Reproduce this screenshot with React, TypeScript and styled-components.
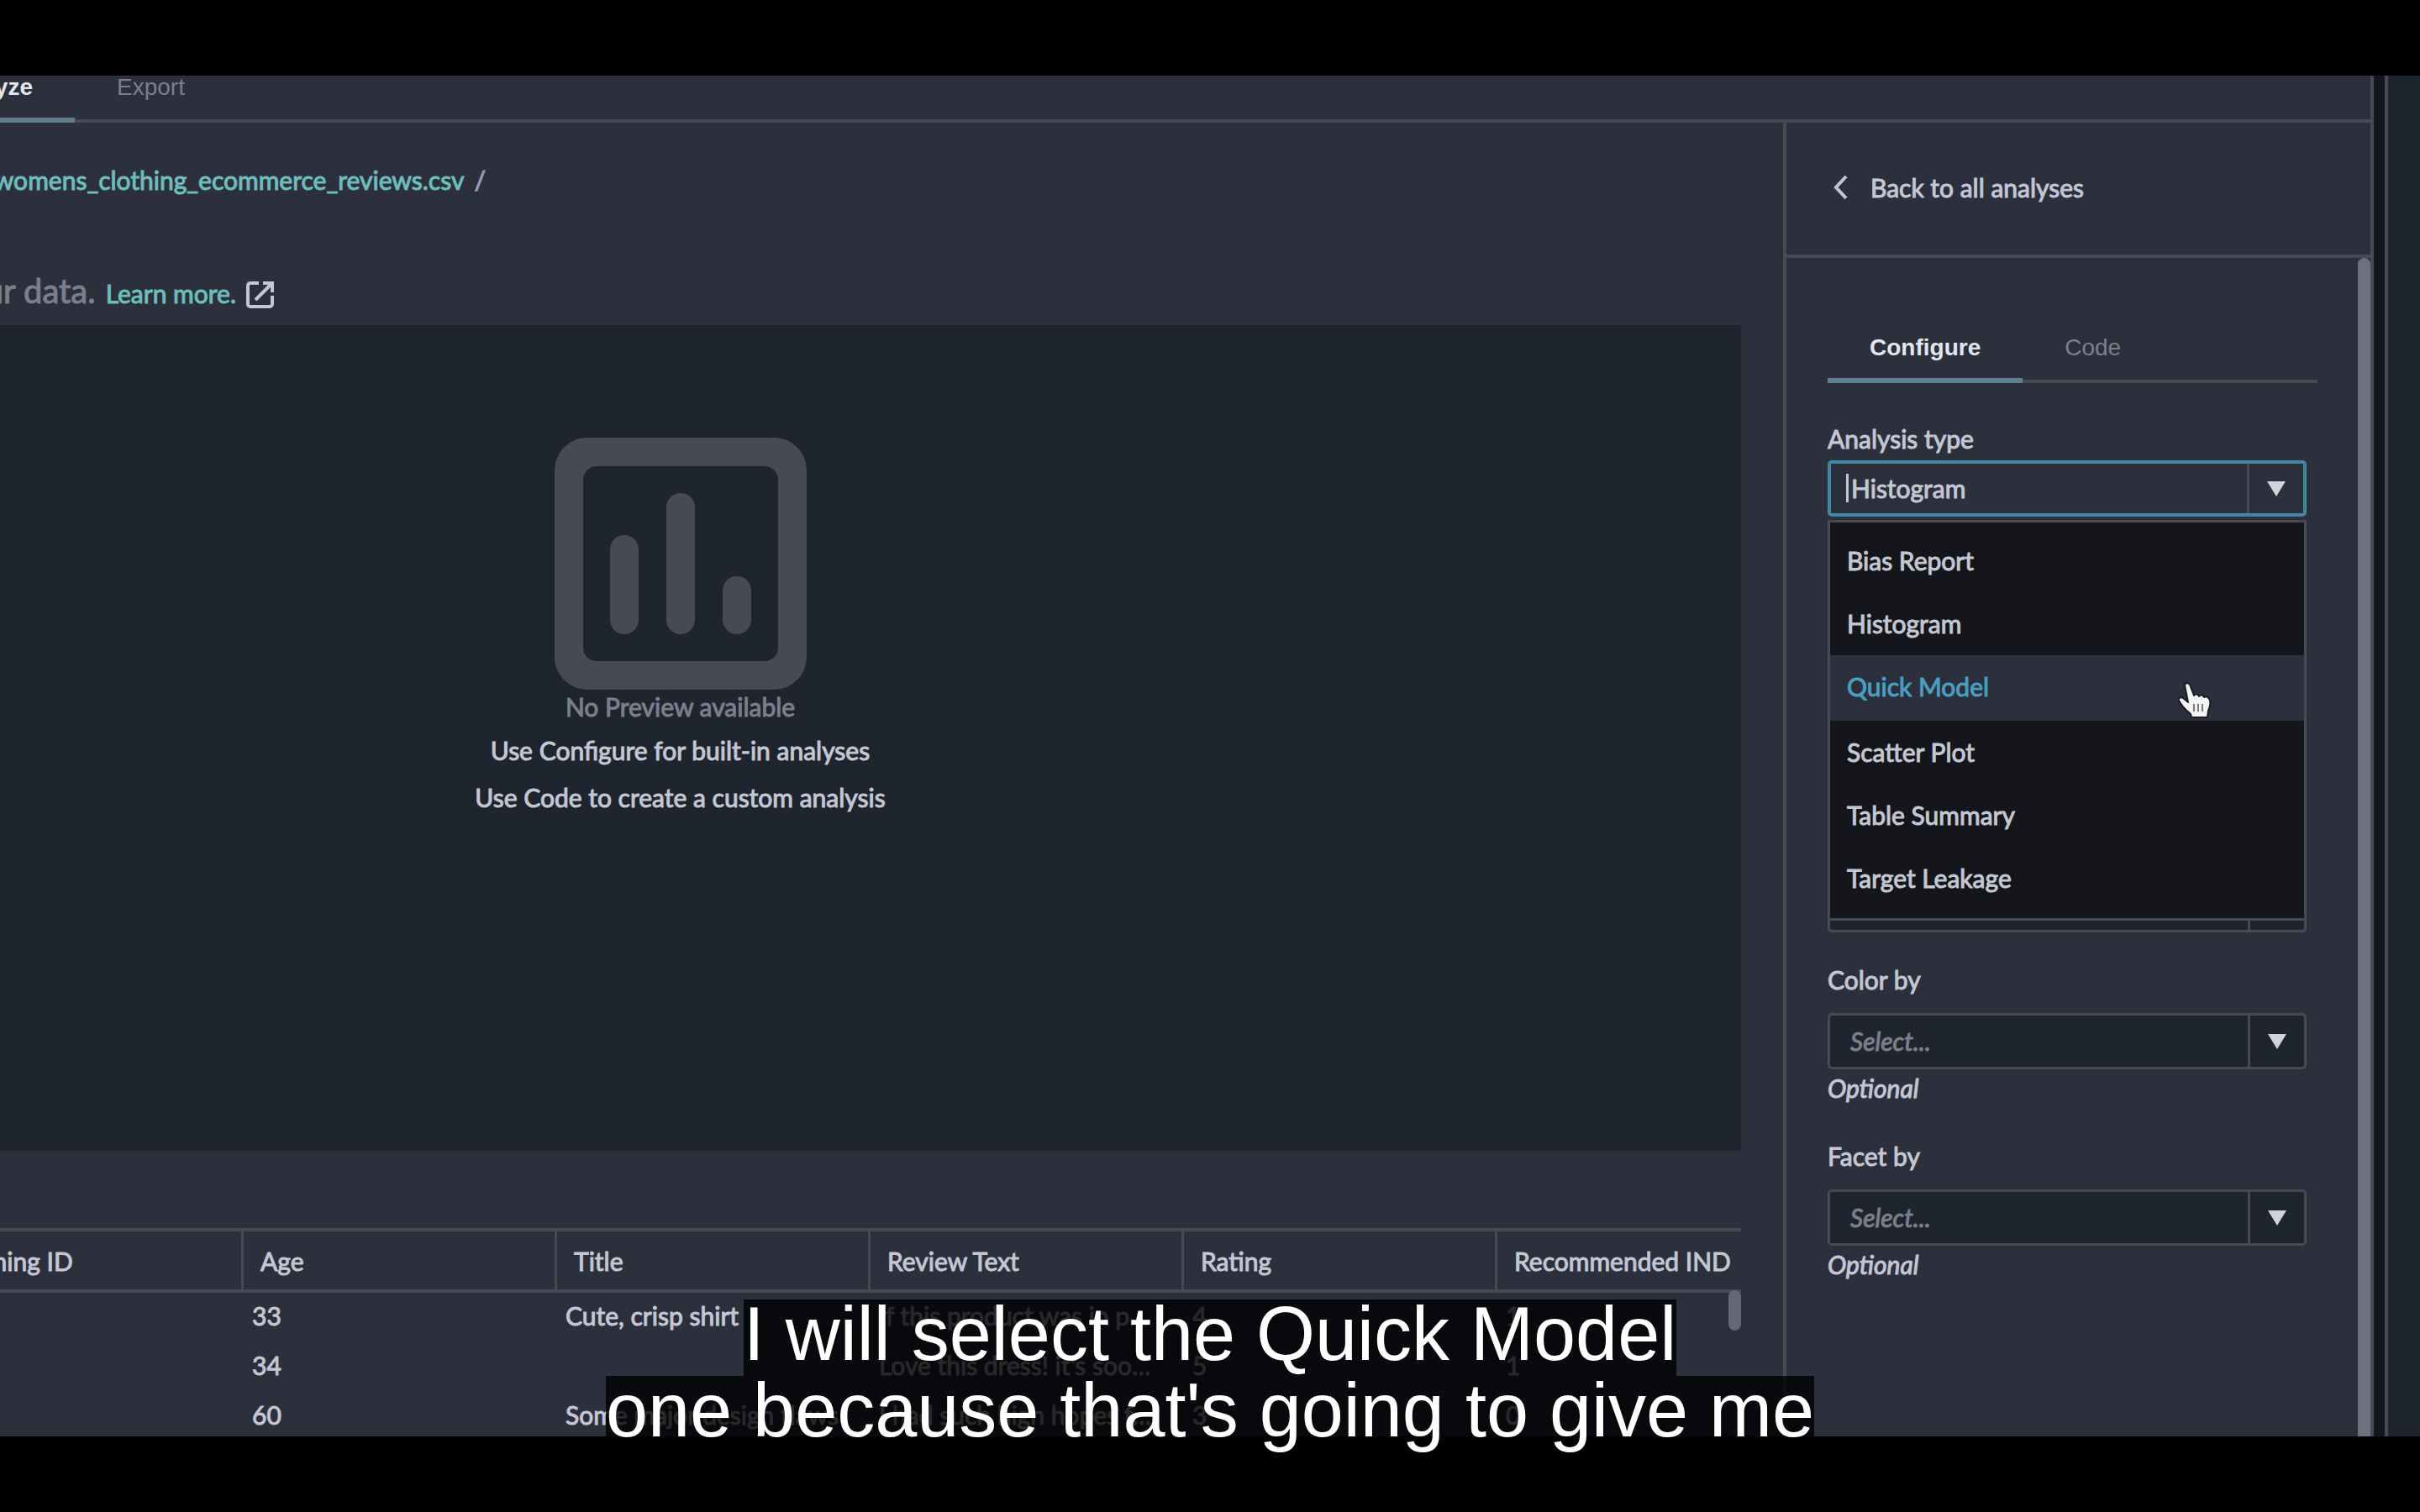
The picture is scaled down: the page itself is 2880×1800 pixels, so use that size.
import React from 'react';
import styled, { createGlobalStyle } from 'styled-components';

const c = {
  bg: '#2c303d',
  deep: '#1f252f',
  menu: '#15161b',
  line: '#474a53',
  text: '#c4c7d3',
  muted: '#7b7f8b',
  teal: '#6dbdbb',
  blue: '#4a9fc0',
  focus: '#3f87a3',
};
const sans = "Lato, 'Open Sans', sans-serif";
const helv = "'Liberation Sans', Arial, sans-serif";

const Global = createGlobalStyle`
  * { box-sizing: border-box; }
  html, body { margin: 0; background: #000; }
  button, input, select { font: inherit; color: inherit; background: none; border: 0; padding: 0; margin: 0; border-radius: 0; outline: 0; }
  a { text-decoration: none; }
`;

const Stage = styled.div`
  position: relative;
  height: 100vh;
  padding: 90px 0;
  overflow: hidden;
  background: #000;
  font: 400 30px/40px ${sans};
  color: ${c.text};
`;
const Frame = styled.div`
  display: flex;
  height: 100%;
  background: ${c.deep};
  overflow: hidden;
  -webkit-text-stroke: 1px;
`;
const Window = styled.div`
  flex: 1;
  min-width: 0;
  display: flex;
  flex-direction: column;
  background: ${c.bg};
  border-right: 4px solid ${c.line};
`;
const Edge = styled.div`
  width: 17px;
  margin-right: 38px;
  background: ${c.menu};
  border-right: 4px solid ${c.line};
`;
const TabBar = styled.nav<{ $h: number }>`
  display: flex;
  flex: none;
  height: ${p => p.$h}px;
  font-family: ${helv};
  font-size: 28px;
  line-height: 32px;
  box-shadow: inset 0 -4px ${c.line};
  -webkit-text-stroke: 0;
`;
const Tab = styled.button<{ $on?: boolean; $cut?: boolean }>`
  display: flex;
  justify-content: flex-end;
  align-items: flex-end;
  width: ${p => (p.$cut ? '89px' : 'auto')};
  padding: 0 50px 20px ${p => (p.$cut ? 0 : 50)}px;
  font-weight: ${p => (p.$on ? 700 : 400)};
  color: ${p => (p.$on ? '#e4e6ee' : c.muted)};
  border-bottom: 6px solid ${p => (p.$on ? '#627d8e' : 'transparent')};
`;
const Body = styled.div`
  flex: 1;
  min-height: 0;
  display: flex;
`;
const Main = styled.main`
  flex: 1;
  min-width: 0;
  padding-right: 50px;
  overflow: hidden;
`;
const Line = styled.div<{ $w: number; $top: number }>`
  display: flex;
  justify-content: flex-end;
  align-items: baseline;
  width: ${p => p.$w}px;
  margin-top: ${p => p.$top}px;
  gap: 12px;
  white-space: nowrap;
  overflow: hidden;
  color: #9a9daa;
`;
const Link = styled.a`
  color: ${c.teal};
`;
const Lead = styled.span`
  font-size: 40px;
  line-height: 48px;
  color: ${c.muted};
`;
const External = styled.svg`
  flex: none;
  align-self: flex-end;
  width: 33px;
  height: 36px;
`;
const Preview = styled.section`
  display: flex;
  flex-direction: column;
  align-items: center;
  height: 983px;
  margin: 17px 0 92px -453px;
  padding-top: 134px;
  background: ${c.deep};
  p { margin: 0; line-height: 56px; }
`;
const Faint = styled.span`
  line-height: 40px;
  margin-bottom: 4px;
  color: ${c.muted};
`;
const TableWrap = styled.div`
  position: relative;
  margin-left: -83px;
  overflow: hidden;
  border-top: 4px solid ${c.line};
`;
const Table = styled.table`
  width: 100%;
  table-layout: fixed;
  border-collapse: separate;
  border-spacing: 0;
  text-align: left;
  white-space: nowrap;
  th {
    width: 373px;
    height: 73px;
    padding: 0 0 0 20px;
    font-weight: 400;
    border-bottom: 4px solid ${c.line};
    border-right: 3px solid ${c.line};
  }
  th:last-child { width: auto; border-right: 0; }
  td { height: 59px; padding: 0 10px 5px; overflow: hidden; text-overflow: ellipsis; }
`;
const Thumb = styled.div`
  position: absolute;
  right: 0;
  top: 70px;
  width: 15px;
  height: 48px;
  border-radius: 8px;
  background: #656976;
`;
const Side = styled.aside`
  width: 699px;
  display: flex;
  flex-direction: column;
  border-left: 4px solid ${c.line};
`;
const Back = styled.button`
  display: flex;
  flex: none;
  align-items: center;
  gap: 26px;
  height: 161px;
  padding: 0 0 4px 54px;
  border-bottom: 4px solid ${c.line};
`;
const Scroll = styled.div`
  flex: 1;
  display: flex;
  min-height: 0;
`;
const Form = styled.form`
  flex: 1;
  min-width: 0;
  padding: 64px 48px 0 49px;
`;
const Track = styled.div`
  width: 15px;
  border-radius: 8px 8px 0 0;
  background: #6b717d;
`;
const Field = styled.div<{ $top: number; $gap: number }>`
  display: flex;
  flex-direction: column;
  position: relative;
  width: 570px;
  margin-top: ${p => p.$top}px;
  label { line-height: 40px; margin-bottom: ${p => p.$gap}px; }
`;
const Box = styled.div<{ $focus?: boolean }>`
  display: grid;
  grid-template-columns: 1fr 67px;
  height: 67px;
  border: ${p => (p.$focus ? `4px solid ${c.focus}` : `3px solid ${c.line}`)};
  border-radius: 5px;
  background: ${p => (p.$focus ? c.bg : c.deep)};
  input, select { min-width: 0; padding: 0 0 2px 24px; appearance: none; grid-area: 1 / 1; }
  select { grid-column: 1 / 3; font-style: italic; color: ${c.muted}; }
`;
const Arrow = styled.span`
  grid-area: 1 / 2;
  display: flex;
  align-items: center;
  justify-content: center;
  border-left: 3px solid ${c.line};
  pointer-events: none;
  &::after {
    content: '';
    border: 11px solid transparent;
    border-top: 18px solid #d0d3de;
    border-bottom: 0;
  }
`;
const Caret = styled.span`
  position: absolute;
  left: 22px;
  top: 62px;
  width: 3px;
  height: 34px;
  background: ${c.text};
`;
const Hint = styled.em`
  line-height: 36px;
  margin-top: 4px;
`;
const Menu = styled.ul`
  position: absolute;
  z-index: 2;
  top: 117px;
  left: 0;
  right: 0;
  margin: 0;
  padding: 8px 0 10px;
  list-style: none;
  background: ${c.menu};
  border: 3px solid ${c.line};
`;
const Option = styled.li<{ $on?: boolean }>`
  padding: 17px 20px 18px;
  color: ${p => (p.$on ? c.blue : c.text)};
  background: ${p => (p.$on ? c.bg : 'transparent')};
  border-bottom: ${p => (p.$on ? 3 : 0)}px solid ${c.bg};
`;
const Cursor = styled.svg`
  position: absolute;
  z-index: 3;
  left: 416px;
  top: 309px;
  width: 42px;
  height: 46px;
`;
const Caption = styled.div`
  position: absolute;
  left: 0;
  right: 0;
  top: 1547px;
  display: flex;
  flex-direction: column;
  align-items: center;
  font: 400 90px/83px ${helv};
  color: #fff;
  span { padding-bottom: 8px; background: rgba(0, 0, 0, 0.8); }
`;

const headers = ['Clothing ID', 'Age', 'Title', 'Review Text', 'Rating', 'Recommended IND'];
const rows = [
  ['', '33', 'Cute, crisp shirt', 'If this product was in p…', '4', '1'],
  ['', '34', '', "Love this dress! it's soo…", '5', '1'],
  ['', '60', 'Some major design flaws', 'I had such high hopes f…', '3', '0'],
];
const types = ['Bias Report', 'Histogram', 'Quick Model', 'Scatter Plot', 'Table Summary', 'Target Leakage'];

function SelectField({ id, label, top }: { id: string; label: string; top: number }) {
  return (
    <Field $top={top} $gap={20}>
      <label htmlFor={id}>{label}</label>
      <Box>
        <select id={id}><option>Select...</option></select>
        <Arrow />
      </Box>
      <Hint>Optional</Hint>
    </Field>
  );
}

export default function App() {
  return (
    <Stage>
      <Global />
      <Frame>
        <Window>
          <TabBar $h={56}>
            <Tab $on $cut>Analyze</Tab>
            <Tab>Export</Tab>
          </TabBar>
          <Body>
            <Main>
              <Line $w={578} $top={48}>
                <Link href="#file">womens_clothing_ecommerce_reviews.csv</Link>
                <span>/</span>
              </Line>
              <Line $w={326} $top={88}>
                <Lead>your data.</Lead>
                <Link href="#learn">Learn more.</Link>
                <External viewBox="0 0 33 36" fill="none" stroke="#c4c7d3" strokeWidth="4">
                  <path d="M15 3H5a3 3 0 0 0-3 3v22a3 3 0 0 0 3 3h23a3 3 0 0 0 3-3V18M20 3h11v11M30 4L11 23" />
                </External>
              </Line>
              <Preview>
                <svg width="300" height="300" viewBox="0 0 300 300" fill="#464a54">
                  <rect x="17" y="17" width="266" height="266" rx="22" fill="none" stroke="#464a54" strokeWidth="34" />
                  <rect x="66" y="116" width="34" height="118" rx="17" />
                  <rect x="133" y="66" width="34" height="168" rx="17" />
                  <rect x="200" y="165" width="34" height="69" rx="17" />
                  <path d="M34 50a16 16 0 0 1 16-16H34zM266 50a16 16 0 0 0-16-16h16zM34 250a16 16 0 0 0 16 16H34zM266 250a16 16 0 0 1-16 16h16z" />
                </svg>
                <Faint>No Preview available</Faint>
                <p>Use Configure for built-in analyses</p>
                <p>Use Code to create a custom analysis</p>
              </Preview>
              <TableWrap>
                <Table>
                  <thead><tr>{headers.map(h => <th key={h}>{h}</th>)}</tr></thead>
                  <tbody>{rows.map((r, i) => <tr key={i}>{r.map((v, j) => <td key={j}>{v}</td>)}</tr>)}</tbody>
                </Table>
                <Thumb />
              </TableWrap>
            </Main>
            <Side>
              <Back>
                <svg width="20" height="30" viewBox="0 0 20 30" fill="none" stroke="#c4c7d3" strokeWidth="4"><path d="M17 2L5 15l12 13" /></svg>
                Back to all analyses
              </Back>
              <Scroll>
                <Form>
                  <TabBar $h={85}>
                    <Tab type="button" $on>Configure</Tab>
                    <Tab type="button">Code</Tab>
                  </TabBar>
                  <Field $top={46} $gap={6}>
                    <label htmlFor="type">Analysis type</label>
                    <Box $focus>
                      <input id="type" defaultValue="Histogram" />
                      <Arrow />
                    </Box>
                    <Caret />
                    <Menu role="listbox">
                      {types.map(t => <Option key={t} role="option" $on={t === 'Quick Model'}>{t}</Option>)}
                    </Menu>
                    <Cursor viewBox="0 0 42 46">
                      <path
                        d="M9 5c0-3 4-4 6-1l5 13c1-2 5-2 6 1 1-2 5-2 6 1 2-2 5 0 6 2l1 1c1 5 0 9-2 13l-1 8H17l-1-4C11 35 6 31 2 23c-1-3 2-5 5-3l6 5z"
                        fill="#f4f4f4" stroke="#1a1b20" strokeWidth="2" strokeLinejoin="round"
                      />
                      <path d="M20 27v9M25 27v9M30 27v9" stroke="#77787c" strokeWidth="2" />
                    </Cursor>
                  </Field>
                  <Field $top={428} $gap={0}>
                    <Box><select aria-label="X axis" /><Arrow /></Box>
                  </Field>
                  <SelectField id="color" label="Color by" top={36} />
                  <SelectField id="facet" label="Facet by" top={43} />
                </Form>
                <Track />
              </Scroll>
            </Side>
          </Body>
        </Window>
        <Edge />
      </Frame>
      <Caption>
        <span>I will select the Quick Model</span>
        <span>one because that's going to give me</span>
      </Caption>
    </Stage>
  );
}
